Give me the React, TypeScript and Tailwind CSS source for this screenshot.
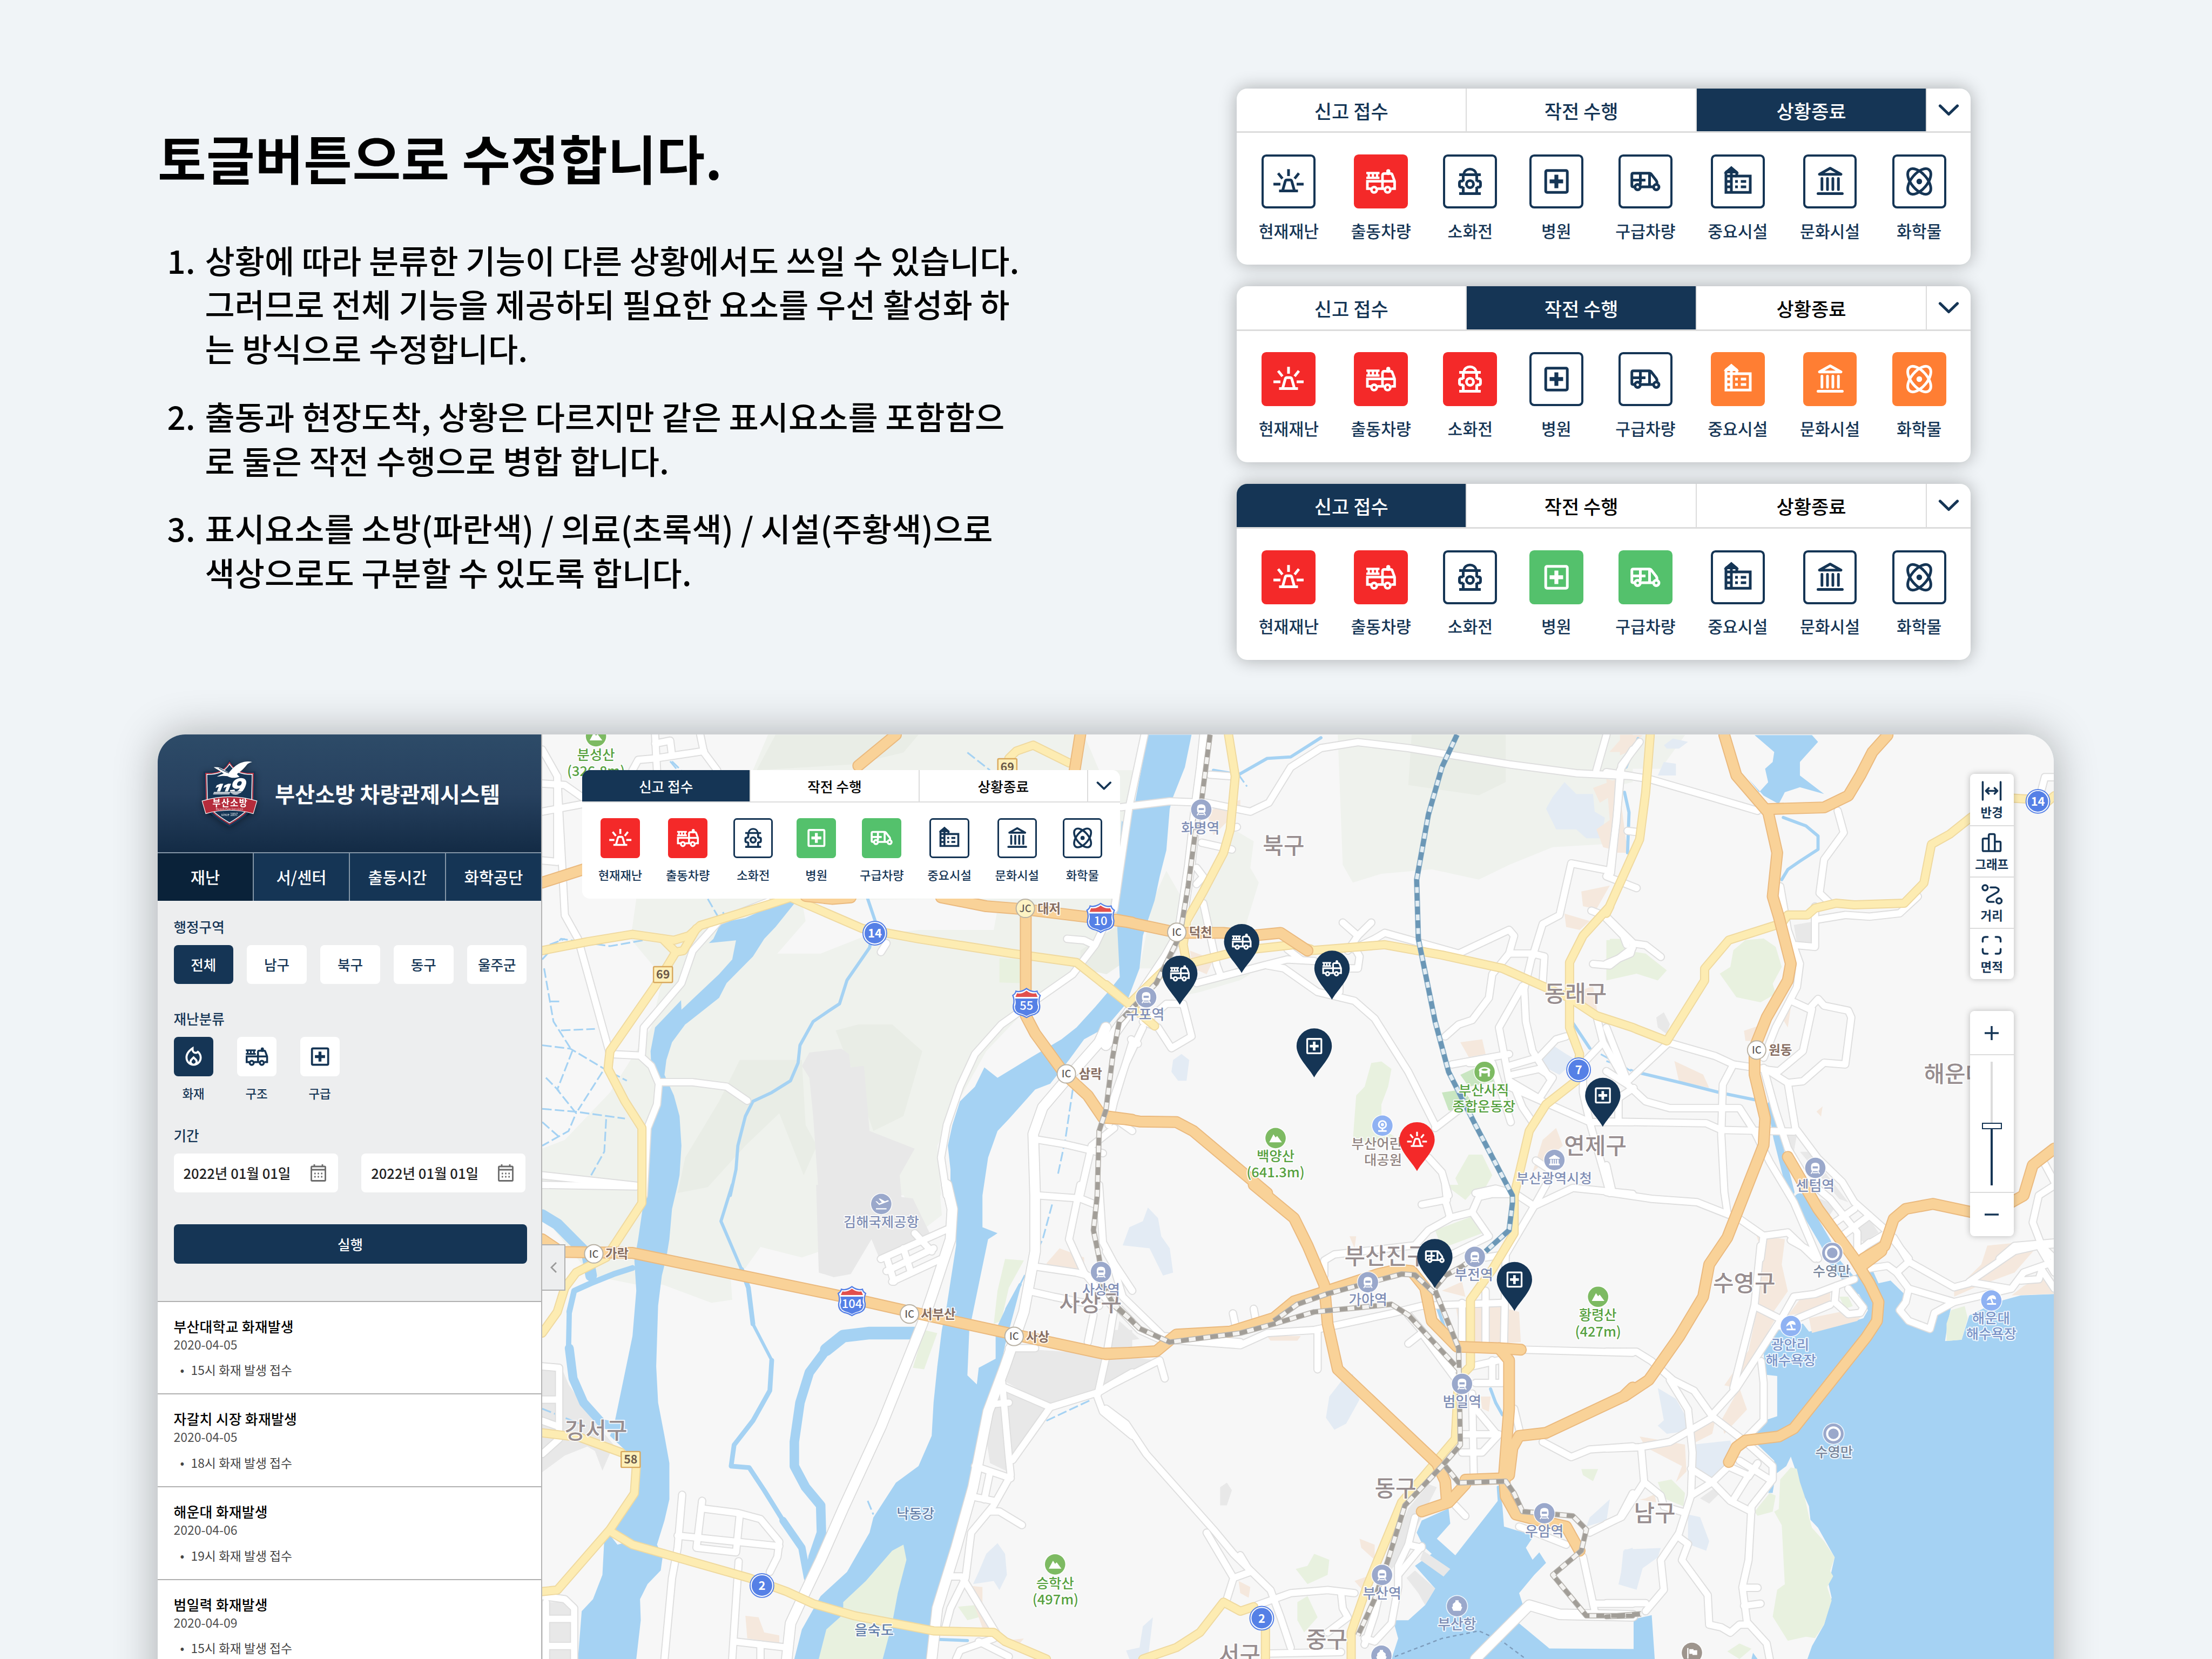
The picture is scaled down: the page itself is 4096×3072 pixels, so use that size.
import React from "react";
import { MdOutlineLocalFireDepartment } from "react-icons/md";

/* ------------------------------------------------------------------ */
/* Pictograms, drawn in a 40 × 40 box                                   */
/* ------------------------------------------------------------------ */

type GlyphName = "siren" | "truck" | "hydrant" | "hospital" | "ambulance" | "building" | "museum" | "atom";

function Glyph({ name }: { name: GlyphName }) {
  const base = { fill: "none", stroke: "currentColor", strokeWidth: 2 } as const;
  switch (name) {
    case "siren":
      return (
        <g {...base}>
          <path d="M20 10.9V16M12.3 13.9l3.2 4M27.7 13.9l-3.2 4M8.8 22H14M26 22h5.2M13 27h14" />
          <path d="M15.6 27l2-7.2q.3-.9 1.1-.9h2.6q.8 0 1.1.9l2 7.2" />
        </g>
      );
    case "truck":
      return (
        <g {...base} strokeWidth={1.9}>
          <path d="M9.2 13.8h9.8M9.2 17.4h9.8M11 13.8v3.6M14.1 13.8v3.6M17.2 13.8v3.6" strokeWidth={1.7} />
          <path d="M12.6 25.4H10V19.9h20.2M17.6 25.4h4.8M27.8 25.4h2.4v-5.5l-1.7-4.7q-.3-1-1.3-1H22.6q-1.4 0-1.4 1.4v9.8" />
          <path d="M25.5 13.8v-1.4" strokeWidth={3} strokeLinecap="round" />
          <circle cx="15" cy="26.2" r="2" />
          <circle cx="25" cy="26.2" r="2" />
        </g>
      );
    case "hydrant":
      return (
        <g {...base}>
          <path d="M15.500 14.600C16 9.600 24 9.600 24.500 14.600" strokeWidth={1.900} />
          <path d="M12 15h16M12 29h16M15 15v5M25 15v5M15 24v4.500M25 24v4.500" />
          <path d="M15 19.700h-1.200q-1.600 0-1.600 1.300v2q0 1.300 1.600 1.300H15M25 19.700h1.200q1.600 0 1.600 1.300v2q0 1.300-1.600 1.300H25" />
          <circle cx="20" cy="22" r="2.600" />
        </g>
      );
    case "hospital":
      return (
        <g {...base}>
          <rect x="12.100" y="11.900" width="16" height="16.200" rx="1" />
          <path d="M15 20h10M20 15v10" strokeWidth={2.900} />
        </g>
      );
    case "ambulance":
      return (
        <g {...base}>
          <path d="M12.200 24h-1.300q-1-.100-1-1V15q0-1.100 1.100-1.100h12q.800 0 1.200.600l3.800 4.900q.500.700.500 1.600v.800M16.200 24h9.600M23 14v10" />
          <path d="M10 19h10M16.200 14v8.500" />
          <circle cx="14.200" cy="24.200" r="2" />
          <circle cx="28" cy="24.200" r="2" />
        </g>
      );
    case "building":
      return (
        <g {...base}>
          <path d="M11.200 28.100V13.300L15.200 10l4 3.300V16h10v12.100z" />
          <path d="M15.200 11v17M11 12.900h8M11 16h8M11 20h4.200M11 24h4.200M18 20h2M22.200 20h4M18 24h2M22.200 24h4" />
          <path d="M12 13l3.200-3 3.200 3z" fill="currentColor" />
        </g>
      );
    case "museum":
      return (
        <g {...base} strokeLinecap="round" strokeLinejoin="round">
          <path d="M12 14.700L20 10.200l8 4.500z" />
          <path d="M13.900 17.800v8.200M18 17.800v8.200M22 17.800v8.200M26.100 17.800v8.200M11 29h18" />
        </g>
      );
    case "atom":
      return (
        <g {...base}>
          <ellipse cx="20" cy="20" rx="5.900" ry="11.300" transform="rotate(40 20 20)" />
          <ellipse cx="20" cy="20" rx="5.900" ry="11.300" transform="rotate(-40 20 20)" />
          <circle cx="20" cy="20" r="2.100" fill="currentColor" stroke="none" />
        </g>
      );
  }
}

/* ------------------------------------------------------------------ */
/* Toggle panel. Every measure is in em, so text size sets the scale    */
/* ------------------------------------------------------------------ */

const LAYERS: { label: string; icon: GlyphName }[] = [
  { label: "현재재난", icon: "siren" },
  { label: "출동차량", icon: "truck" },
  { label: "소화전", icon: "hydrant" },
  { label: "병원", icon: "hospital" },
  { label: "구급차량", icon: "ambulance" },
  { label: "중요시설", icon: "building" },
  { label: "문화시설", icon: "museum" },
  { label: "화학물", icon: "atom" },
];

const TILE = {
  off: "border-[0.46em] border-[#153555] bg-white text-[#153555]",
  red: "bg-[#f42929] text-white",
  green: "bg-[#54c16c] text-white",
  orange: "bg-[#ff7e33] text-white",
};
type Tone = keyof typeof TILE;

const TAB_TONE = {
  active: "bg-[#153555] text-white",
  navy: "text-[#153555]",
  black: "text-black",
};

function TogglePanel({ tabs, tones, className }: { tabs: (keyof typeof TAB_TONE)[]; tones: Tone[]; className: string }) {
  return (
    <div className={`flex h-[33.4em] w-[139.3em] flex-col overflow-hidden rounded-[2em] bg-white font-medium ${className}`}>
      <div className="flex h-[8.45em] border-b-[0.31em] border-[#dcdcdc]">
        {["신고 접수", "작전 수행", "상황종료"].map((t, i) => (
          <div key={t} className={`flex w-[43.68em] items-center justify-center border-r-[0.29em] border-[#dcdcdc] pt-[0.2em] ${TAB_TONE[tabs[i]]}`}>
            <span className="text-[3.6em] leading-none">{t}</span>
          </div>
        ))}
        <div className="flex flex-1 items-center justify-center text-[#153555]">
          <svg className="h-[2.2em] w-[4em]" viewBox="0 0 40 22" fill="none" stroke="currentColor" strokeWidth="5.200" strokeLinecap="round" strokeLinejoin="round">
            <path d="M3.500 3L20 19 36.500 3" />
          </svg>
        </div>
      </div>
      <div className="flex gap-[6.11em] pt-[4.1em] pl-[4.15em]">
        {LAYERS.map((l, i) => (
          <div key={l.label} className="flex flex-col items-center gap-[2.4em]">
            <div className={`flex h-[10.25em] w-[10.25em] items-center justify-center rounded-[0.9em] ${TILE[tones[i]]}`}>
              <svg className="h-[10.25em] w-[10.25em] shrink-0" viewBox="0 0 40 40">
                <Glyph name={l.icon} />
              </svg>
            </div>
            <span className="text-[3.1em] leading-[1.18] whitespace-nowrap text-[#153555]">{l.label}</span>
          </div>
        ))}
      </div>
    </div>
  );
}

/* ------------------------------------------------------------------ */
/* Map                                                                  */
/* ------------------------------------------------------------------ */

/* Six sheets, each with its own local grid: origin x, origin y, units per pixel in x and y. */
const SHEETS: Record<string, [number, number, number, number]> = {
  A: [1030, 1390, 1.4, 1.7818],
  B: [2100, 1390, 1.568, 1.7818],
  C: [3050, 1390, 1.7422, 1.568],
  D: [1030, 2250, 1.4, 1.7422],
  E: [2100, 2250, 1.568, 1.7422],
  F: [3050, 2350, 1.7422, 1.96],
};

function at(sheet: string, x: number, y: number): [number, number] {
  const [ox, oy, sx, sy] = SHEETS[sheet];
  return [ox + x / sx, oy + y / sy];
}

/* "A 1,2 3,4 B 5,6" -> SVG points on the common grid; a letter switches the sheet. */
function pts(line: string): string {
  let sheet = "A";
  const out: string[] = [];
  for (const tok of line.trim().split(/\s+/)) {
    if (SHEETS[tok]) {
      sheet = tok;
      continue;
    }
    const [x, y] = tok.split(",").map(Number);
    const [gx, gy] = at(sheet, x, y);
    out.push(gx.toFixed(1) + "," + gy.toFixed(1));
  }
  return out.join(" ");
}

function Areas({ data, fill }: { data: string[]; fill: string }) {
  return (
    <g fill={fill}>
      {data.map((d, i) => (
        <polygon key={i} points={pts(d)} />
      ))}
    </g>
  );
}

function Lines({ data, color, width, dash, cap = "round" }: { data: string[]; color: string; width: number; dash?: string; cap?: "round" | "butt" }) {
  return (
    <g fill="none" stroke={color} strokeWidth={width} strokeLinecap={cap} strokeLinejoin="round" strokeDasharray={dash}>
      {data.map((d, i) => (
        <polyline key={i} points={pts(d)} />
      ))}
    </g>
  );
}

const HILLS = [
  "A 250,565 235,700 320,830 290,1000 180,1220 60,1380 0,1410 0,1568 D 0,100 130,300 250,330 320,330 450,390 505,380 500,290 540,275 580,205 690,240 738,220 730,0 A 960,1568 1060,1568 1050,1400 1110,1240 1180,1080 1300,920 1420,800 1568,560",
  "A 600,10 1440,10 1480,130 1568,130 1568,300 1500,560 600,560 250,565 250,400 470,130 560,130",
  "D 950,0 1055,0 1062,100 1000,160",
  "B 690,10 1568,10 1568,170 1530,180 1480,380 1330,390 1200,450 1110,500 970,465 820,480 735,510 705,450",
  "B 380,330 440,370 430,460 455,510 420,640 420,680 240,690 290,560 350,410",
  "B 180,470 225,560 210,680 150,800 100,800 140,570",
  "B 270,850 400,810 430,820 400,840 280,880 200,900 150,940",
  "C 0,10 150,10 260,10 220,60 180,110 0,110",
];
const HILLS_DARK = [
  "A 620,10 1000,10 960,70 830,110 570,130",
  "A 525,1110 690,1110 700,1330 730,1400 695,1500 630,1290 540,1400 440,1540 360,1560 380,1440 470,1250",
  "A 780,1010 840,990 930,990 1010,1080 960,1300 880,1350 820,1130 800,1075",
  "B 910,10 1190,10 1190,170 1110,215 900,180",
  "A 1430,740 1568,620 1568,760 1500,820 1430,800",
];
const LAND_PATCH = ["A 690,570 1050,565 1210,600 1200,670 1000,670 860,690 740,750 625,750 700,640"];
const GRAY = [
  "A 710,1085 795,1072 815,1090 820,1135 855,1130 870,1350 990,1410 950,1500 955,1568 735,1568 720,1300 710,1170 690,1130",
  "D 728,0 945,0 955,40 985,45 1030,160 1000,190 895,240 875,180 820,295 775,305 735,290",
  "D 1250,540 1490,560 1480,680 1350,735 1230,650",
  "D 1220,680 1340,740 1250,910",
  "D 1200,720 1225,700 1240,950 1190,920 1175,800",
  "D 0,590 50,600 70,660 130,770 190,860 160,945 140,880 120,865 60,895 0,950",
  "D 10,1380 80,1380 95,1410 95,1568 0,1568",
  "D 1520,480 1568,480 1568,600 1490,690 1490,580",
  "C 620,575 685,565 680,630 630,630",
  "C 165,850 190,835 210,870 200,900 170,880",
  "C 680,1380 760,1410 730,1450",
  "C 640,1250 670,1250 800,1400 770,1390",
  "C 590,1200 630,1200 620,1250",
  "C 820,1490 870,1450 900,1490 850,1520",
  "E 960,990 985,1000 880,1230 830,1300 860,1180 900,1070",
  "F 310,970 360,930 385,940 340,990",
  "E 0,560 150,580 0,650",
  "E 40,450 100,510 30,520",
  "E 340,1000 360,985 375,1010 360,1060 340,1060",
];
const DOCKS = ["E 945,1210 1025,1270 1005,1295 935,1240", "E 895,1300 920,1275 980,1335 950,1390 930,1350"];
const LAKES = [
  "B 1365,170 1400,210 1450,210 1455,270 1485,290 1475,360 1430,360 1400,330 1340,330 1310,260 1330,220",
  "B 200,1110 225,1090 248,1110 240,1180 215,1180 195,1150",
  "B 1330,1060 1370,1090 1400,1110 1350,1160 1300,1130 1300,1090",
  "E 125,75 155,110 165,170 190,210 200,290 170,300 130,210 50,200 70,140 110,120",
  "E 735,625 745,690 755,710 715,790 680,810 655,770 665,700 700,650",
  "D 1210,1185 1230,1220 1235,1290 1215,1340 1200,1310 1145,1320 1160,1280 1180,1220",
  "E 1440,1100 1500,1040 1490,1110 1430,1130",
  "E 1540,1210 1568,1200 1568,1310 1530,1320",
  "E 110,1460 140,1430 125,1568 70,1568 60,1540 100,1530",
  "F 170,560 230,600 260,660 270,720 200,730 170,700 190,680",
  "F 285,770 410,755 420,800 390,860 340,900 285,850",
  "F 270,1030 310,1040 340,1130 330,1165 270,1140",
  "F 60,1160 180,1155 170,1190 120,1230 100,1310 40,1290 50,1240",
  "C 190,40 220,20 270,30 240,50 200,50",
  "C 190,90 230,95 230,130 170,130",
];
const PARKS = [
  "B 790,1120 820,1115 850,1140 840,1200 820,1260 820,1340 860,1370 800,1390 735,1380 745,1230 770,1200",
  "B 1080,1430 1120,1430 1150,1500 1120,1560 1060,1560 1040,1510",
  "B 1500,700 1568,700 1568,740 1540,750 1568,780 1540,820 1490,830",
  "C 0,620 60,620 60,650 130,660 200,710 170,740 100,720 0,740",
  "C 460,620 520,615 560,640 580,700 550,750 560,780 510,805 430,790 375,720 410,700 420,650",
  "E 980,150 1100,100 1120,160 1000,210",
  "E 1010,0 1110,0 1070,50",
  "E 565,1270 600,1260 620,1220 665,1240 660,1290 600,1320",
  "E 570,1380 600,1360 630,1430 590,1480 570,1440",
  "E 1415,940 1465,940 1450,980 1420,960",
  "F 170,910 215,900 260,950 255,1000 190,970",
  "A 1215,765 1270,770 1270,850 1215,848",
  "D 1230,245 1280,250 1240,340 1220,450 1200,460 1210,350",
  "D 1015,480 1050,490 1015,610 985,605",
  "F 400,1540 440,1510 480,1530 440,1568",
  "D 1105,1395 1150,1390 1160,1430 1130,1440",
];
const SHORE_PARKS = [
  "D 960,1190 968,1240 945,1350 930,1450 905,1568 735,1568 755,1470 800,1420 800,1380 860,1310 930,1210",
  "F 610,855 630,860 640,910 655,960 670,1040 680,1080 720,1130 755,1190 740,1240 750,1260 730,1300 745,1350 720,1440 690,1490 660,1485 600,1500 550,1410 565,1310 590,1290 580,1070 555,1020 570,1010 575,900",
  "F 490,1020 540,950 560,960 550,1020 500,1035",
  "F 1140,270 1185,255 1195,300 1175,380 1125,385 1125,320",
  "F 770,220 800,220 815,255 790,265",
];
const TOWN = [
  "B 300,270 400,230 400,260 320,350",
  "B 1450,190 1520,160 1500,220 1470,240",
  "B 1460,330 1510,290 1555,380 1545,410 1480,390",
  "B 1415,540 1500,520 1460,600 1420,590",
  "B 1365,615 1440,640 1410,670 1370,660",
  "B 1055,1050 1120,1040 1130,1090 1080,1100",
  "B 250,740 320,770 300,820 260,800",
  "B 1530,10 1568,10 1568,60 1530,80",
  "B 1400,880 1450,860 1465,960 1430,950",
  "B 1300,1380 1340,1340 1360,1400 1270,1490",
  "C 0,140 40,150 70,360 20,360",
  "C 10,60 60,10 120,10 60,60",
  "C 225,980 320,1020 340,1060 240,1040",
  "C 490,1480 520,1500 590,1510 580,1568 520,1568",
  "C 455,890 520,870 510,920 460,920",
  "C 580,850 610,820 600,880",
  "C 695,1130 715,1115 710,1145",
  "E 1040,390 1160,400 1230,420 1235,520 1060,530",
  "E 1000,350 1060,320 1070,370",
  "E 755,1170 800,1190 800,1240 760,1200",
  "E 740,1310 790,1290 780,1360",
  "E 395,1310 430,1330 425,1365 400,1350",
  "E 725,170 745,170 740,210",
  "E 480,500 580,500 570,515 490,515",
  "E 1115,700 1145,700 1140,750 1120,740",
  "F 520,20 590,10 580,100 600,200 550,280 500,250",
  "F 640,230 740,200 740,240 650,280 600,290",
  "F 380,680 440,560 465,640 390,730",
  "F 500,260 560,300 430,560 390,550 470,420",
  "F 270,700 360,680 350,730 280,770",
  "F 1260,30 1350,20 1420,40 1350,130 1230,180 1150,220 1150,200 1240,100",
  "D 540,1425 575,1430 590,1480 630,1490 630,1515 545,1500",
  "D 1130,1325 1170,1330 1170,1430 1210,1510 1280,1500 1260,1530 1180,1500",
  "D 1340,260 1375,210 1440,240 1440,290 1350,280",
  "F 130,970 160,955 165,985 110,975",
  "F 110,740 260,770 265,870 230,910 250,850 130,780",
];
const SHORE_TOWN = ["F 670,300 780,275 860,270 830,310 680,355", "F 1380,180 1450,140 1480,210 1340,215"];

const WATER = [
  "A 600,595 540,630 475,645 455,700 430,730 400,830 375,900 330,960 300,1000 288,1080 290,1130 305,1200 310,1240 290,1320 275,1380 275,1480 272,1568 D 255,180 245,250 250,350 240,500 215,650 190,800 180,830 240,900 260,930 255,1000 235,1060 190,1140 165,1170 160,1290 135,1370 105,1410 95,1568 250,1568 262,1440 260,1370 280,1320 315,1275 320,1230 305,1190 325,1110 338,1040 338,920 325,830 308,720 303,600 308,400 318,300 330,240 338,180 345,80 360,0 A 365,1500 370,1400 365,1300 350,1230 325,1160 330,1110 345,1050 380,990 420,950 470,900 490,850 560,760 590,700 620,660 680,565",
  "B 125,10 255,10 235,120 200,220 190,260 180,400 160,490 145,570 110,690 100,800 60,920 0,1000 A 1440,1040 1400,1110 1350,1190 1310,1210 1240,1310 1210,1350 1185,1440 1170,1568 D 1170,140 1210,160 1185,180 1165,300 1145,420 1135,480 1130,630 1155,660 1160,605 1205,575 1205,480 1235,400 1275,320 1230,530 1190,780 1150,960 1110,1160 1070,1310 1030,1500 1025,1568 670,1568 690,1470 740,1360 810,1280 870,1150 880,1100 940,985 1000,930 1035,830 1040,720 1050,600 1062,480 1075,400 1100,200 1100,130 1085,0 A 1085,1480 1078,1400 1090,1330 1110,1250 1150,1200 1175,1135 1210,1170 1300,1100 1380,1040 1420,1000 1470,930 1510,870 1535,830 1525,580 1540,300 B 60,320 85,250",
  "E 850,1568 870,1500 855,1440 900,1440 950,1390 980,1335 920,1260 970,1220 945,1195 925,1150 940,1110 1020,1070 1025,1120 985,1170 1040,1225 1100,1140 1170,1040 1170,990 1180,1060 1185,1130 1230,1145 1280,1150 1250,1200 1270,1240 1290,1215 1310,1250 1275,1290 1230,1350 1250,1420 1230,1450 1320,1533 F 90,1531 90,1420 150,1405 160,1568",
  "F 665,1568 680,1520 720,1440 745,1340 735,1290 755,1190 720,1120 700,1080 675,1050 670,1000 650,950 630,880 610,815 595,850 560,880 550,950 535,950 560,890 555,830 500,770 480,740 525,680 565,665 565,515 525,510 520,420 570,340 650,320 670,350 760,330 850,300 865,270 820,180 810,150 850,120 880,120 900,170 940,160 985,210 970,270 1000,310 1070,345 1090,280 1140,260 1130,310 1120,385 1175,380 1200,290 1290,240 1370,215 1482,210 1482,1568",
  "C 490,10 555,60 550,90 525,110 535,150 505,180 470,140 520,190 570,215 590,180 640,165 720,185 640,130 640,90 700,30 680,10",
  "F 480,1568 485,1545 500,1568",
];
const ISLETS = ["A 440,715 515,705 505,770 470,820 370,940 368,880 415,750"];
const SHORE_LAND = ["D 175,1150 200,1190 215,1185 190,1150"];
const CHANNELS: [number, string[]][] = [
  [22, ["D 0,100 40,130 80,180 120,230 130,300"]],
  [11, ["D 240,275 190,295 130,325 85,350 72,420"]],
  [10, ["D 72,420 70,540"]],
  [17, ["D 72,540 82,640 110,720 160,790 200,800"]],
  [24, ["D 995,490 870,490 800,500 755,545"]],
  [18, ["D 755,545 710,620 685,720 670,850 670,930 700,1000 740,1060 742,1150 720,1230 710,1310"]],
  [9, ["D 530,280 548,340 560,460", "D 610,580 605,680 560,780 510,860 502,930 550,935 590,1010 640,1110"]],
  [14, ["D 640,1110 690,1200 705,1300", "C 545,1110 565,1210 590,1300 610,1370"]],
  [21, ["C 640,1390 725,1520 F 760,100 830,190"]],
  [6, [
    "D 505,0 475,120 530,280", "D 560,460 610,580",
    "A 865,565 885,640 870,730 810,840 790,920 760,945 720,980 685,1060 680,1120 660,1180 610,1220 560,1250 540,1300 520,1400 515,1480 500,1568",
    "C 585,255 660,280 700,310 700,350 640,385 600,410 580,440",
    "C 110,1015 250,1045 380,1075 490,1095",
    "D 1270,330 1235,410 1215,520", "B 640,20 550,85 480,90 395,145 320,130", "C 60,180 75,240 70,360", "C 105,20 65,105",
    "E 1145,675 1160,720 1180,760", "E 985,400 1020,510", "B 1390,985 1440,1070", "D 1050,1503 1130,1507", "E 1168,1000 1172,1060",
  ]],
];
const STREAMS = [
  "A 0,1060 75,1072 165,1140 225,1180", "A 0,1275 90,1285 220,1308", "A 5,800 30,980 80,1080 40,1210 90,1290 70,1350 0,1400",
  "A 170,1310 165,1420 130,1500", "A 20,720 60,700", "A 50,1010 140,1005", "A 20,912 50,912", "A 0,770 50,700 180,725 290,700",
  "A 0,1320 45,1370", "A 10,1170 45,1215", "A 160,1150 95,1280", "A 345,100 385,150", "A 440,565 465,620 500,700", "A 480,610 520,700", "A 1130,70 1190,130",
  "A 1410,1210 1390,1380 1370,1500", "D 1355,65 1330,180 1270,330", "D 865,1045 880,1090", "D 1340,780 1460,710", "D 0,740 120,800",
  "B 395,145 420,185", "B 1440,1070 1568,1150", "C 0,980 110,1015", "A 340,100 360,130",
];

const ROADS_WIDE = [
  "B 0,1000 A 1480,1050 1390,1180 1330,1270 1305,1360 1310,1568 D 1310,220 1280,420 1230,600 1185,750 1145,1000 1100,1200 1050,1400 1035,1568",
  "D 1075,0 1090,80 1085,180 1040,350 1010,460 900,800 800,1070 740,1240 690,1370 660,1450 650,1568",
  "B 295,10 285,120 270,250 250,450 220,680 180,760 80,930 0,1060",
  "E 1100,1568 1260,1390 1350,1420 1568,1425",
];
const ROADS = [
  "A 0,60 40,150 55,500 60,620 95,700 130,860 180,1090 260,1095 290,1130 310,1190 305,1260 280,1340 270,1568",
  "A 0,175 60,180 105,220", "A 0,270 105,245", "A 40,150 40,440 0,435",
  "A 600,575 470,640 400,740 370,850 270,1000 265,1090", "A 310,1185 400,1185 490,1200 545,1248", "A 0,1500 250,1535",
  "A 240,130 255,95 300,90 430,65", "A 300,10 305,130", "A 300,40 340,30 345,80", "A 420,10 430,70 465,130",
  "A 1500,640 1470,720 1410,820 1320,900 1220,990 1150,1090 1110,1200 1075,1330 1060,1440 1075,1568",
  "A 1395,700 1440,705 1465,720", "A 900,745 915,715", "A 1320,1380 1390,1395 1490,1425", "A 1520,1340 1460,1400 1430,1568 D 1430,0 1400,180 1440,290 1520,410",
  "A 1535,1320 1568,1350", "A 1568,1050 1520,1250 1505,1330", "D 1480,0 1490,190 1520,260 1568,350", "D 1320,35 1430,45 1480,70", "D 1310,270 1420,290 1450,300", "D 1290,350 1360,370 1480,400", "D 1450,520 1465,430",
  "D 1520,410 1500,560 1475,700 1490,750 1568,830", "E 0,740 60,790 120,890 320,1140 380,1220 490,1340 520,1430 550,1530",
  "E 300,1150 380,1300 360,1370", "E 380,1300 430,1280 400,1225", "D 1220,665 1350,735 1480,685 1568,620 E 0,670 160,580 175,640",
  "D 1350,735 1250,910", "D 1222,650 1240,900 1245,960 1200,1060 1140,1150 1125,1300 1085,1400 1070,1470",
  "D 1150,930 1245,970", "D 1140,1030 1200,1045", "D 1190,1080 1215,1080 1275,1125", "D 1080,1295 1115,1295 1210,1490", "D 1190,950 1175,1040",
  "D 1100,1568 1110,1540 1200,1500", "D 1160,1510 1240,1560", "D 1200,725 1240,720",
  "D 372,1025 360,1200 345,1300 325,1568", "D 425,1045 410,1200 515,1215 525,1090", "D 425,1070 520,1085 580,1105 630,1180 625,1230 605,1280",
  "D 360,1160 630,1195", "D 522,1245 505,1568", "D 510,1510 650,1530", "D 580,1520 580,1568",
  "D 0,600 45,605 45,840 0,890", "D 0,710 40,710", "D 0,780 45,800", "D 0,1360 60,1370 85,1400 85,1568", "D 10,1380 10,1568",
  "D 10,1435 85,1435", "D 10,1525 85,1525", "D 900,245 1080,145", "D 915,285 1040,210", "D 930,320 1060,245", "D 990,160 1035,220", "D 960,210 980,290",
  "D 915,240 935,320", "D 1240,540 1310,540", "D 0,0 250,5",
  "B 115,10 70,250 40,480 25,600", "B 45,255 190,235 300,240 430,270 485,240 550,120 640,55 750,35 900,55 1200,110 1400,140 1568,150 C 0,120 140,140 350,195 500,235",
  "B 310,145 370,150", "B 285,375 375,398", "B 270,515 290,490 270,460", "B 290,580 330,790 340,820", "B 390,322 375,325",
  "B 1490,10 1460,130", "B 1568,60 1530,130 1520,300 1500,470 C 0,430 100,465", "B 1500,470 1385,445 1370,520 1350,620 1300,650 1270,760",
  "B 735,735 800,700 830,680 1050,750 1200,670 1215,690 1200,750 1270,750 1305,760 1300,850", "B 705,645 750,690 790,645", "B 750,690 720,740",
  "B 270,850 470,790 540,770 620,775", "B 540,735 580,770", "B 480,790 530,800 630,880 740,910 800,970 900,1150 980,1330",
  "B 695,880 695,800 750,800 755,760 735,720", "B 230,920 255,1030 195,1070 155,1000 110,980", "B 110,1000 60,1120 10,1280", "B 75,1040 95,1055", "B 230,920 180,920 140,960",
  "B 980,1340 1060,1270", "B 960,1440 1000,1490 1020,1568", "B 1010,1030 1050,990 1090,975 1140,900 1150,820 1200,750",
  "B 1240,860 1170,1000 1200,1180 1290,1240", "B 1270,750 1245,870 1250,980 1270,1080 1320,1170", "B 1030,1125 1200,1090",
  "B 1200,1130 1290,1100 1340,1040 1370,1030", "B 1080,1120 1150,1120 1205,1320", "B 1210,1160 1290,1140 1330,1170 1290,1240 1210,1200",
  "B 1200,1200 1280,1240 1440,1320 1568,1320", "B 1460,960 1480,1050 1430,1110", "B 1480,1050 1540,1170", "B 1420,1120 1420,1220 1440,1320 1500,1560",
  "B 1215,1200 1240,1270 1270,1320", "B 1445,605 1480,620 1540,690 1550,720", "B 1450,785 1500,790 1568,730", "B 1280,1450 1320,1480", "B 1100,1560 1160,1545 1210,1560",
  "C 110,30 50,100 40,200 15,420", "C 0,550 90,630 130,635 180,670", "C 90,630 80,660 0,690", "C 70,295 100,298",
  "C 765,235 785,300 720,380 705,480 740,510", "C 575,460 600,590 640,690 630,760 560,880 520,970", "C 690,520 690,560 690,640 630,635",
  "C 690,560 790,545 870,550 970,540 1030,490", "C 610,800 670,825 700,795 720,815 800,830 810,850 790,990 720,985 650,1040 600,1045",
  "C 680,825 650,950 570,1010 520,1005", "C 205,925 360,965 420,990 530,1005 600,1045 625,1180 700,1270 780,1340 820,1400 920,1480 1000,1568",
  "C 420,990 385,1050 380,1200 390,1370 400,1430", "C 520,1000 560,1130 600,1240 660,1330 740,1390", "C 200,930 70,1040 0,880",
  "C 0,1010 70,1050 130,1100 210,1120 440,1120 490,1190 540,1280 620,1400 700,1568", "C 0,1160 330,1165 380,1185 620,1190", "C 90,1060 40,1090 40,1160",
  "C 0,1370 150,1390 300,1400 440,1450 520,1500 600,1490 690,1568", "C 0,1290 20,1370", "C 520,1500 510,1568 F 510,30 490,250 420,560",
  "C 740,1470 820,1420", "C 740,1390 830,1490 830,1550 870,1520", "C 780,1500 870,1440", "C 820,1550 930,1490", "C 1482,135 1450,135 1440,170", "C 1440,1270 1482,1340",
  "C 1482,1350 1430,1380 1410,1460 1440,1530 1482,1568", "C 1482,1520 1350,1530 1300,1568", "F 1200,170 1150,185 1000,90 950,0",
  "F 610,10 690,60", "F 870,115 930,105 960,130 1000,190 990,240 970,270 1000,310 1070,340 1085,280 1150,240 1340,190 1380,130 1482,90",
  "F 1000,190 1150,240", "F 1000,90 960,130", "F 1482,25 1430,30 1350,50 1200,165 1330,190", "F 1430,30 1482,130", "F 1370,160 1430,155 1440,120 1482,190",
  "F 820,155 760,180 690,210 620,220 580,300 430,560 350,660", "F 760,180 755,240 800,285 840,280 850,260 800,190", "F 490,255 570,300", "F 570,330 740,250",
  "F 0,425 100,425 150,460 220,530 290,570 350,665 460,760 550,850 550,900 480,1000 470,1200 450,1300 465,1430 530,1510 540,1568",
  "F 210,530 270,640", "F 270,640 285,800 280,960", "F 0,785 110,780 210,760 350,670", "F 115,780 125,910 180,960 190,1000 250,1020", "F 125,910 50,1040 0,1065",
  "F 512,460 520,540 520,680 450,760", "F 405,850 350,910 280,960 240,1100 180,1200 190,1310 130,1390", "F 280,860 350,910 410,980 480,1020",
  "F 400,850 470,885 420,975", "F 440,830 540,900", "F 500,840 470,890", "F 450,1303 500,1303", "F 455,1370 510,1362",
  "F 240,1115 270,1140 250,1200 335,1330 340,1440 380,1450 410,1470 440,1440 470,1440", "F 0,1360 130,1360",
  "E 15,380 100,480 160,510 400,530 480,490 620,480 850,425 940,400 1180,390", "E 0,220 20,260 50,370 170,500 400,520", "E 630,480 630,610", "E 378,425 385,460",
  "E 440,410 445,440", "E 940,65 1010,50 1025,110 960,150 920,200 680,230 650,250 650,300", "E 1010,0 1015,50", "E 1020,110 1090,90 1110,40 1150,30 1220,30 1275,70 1310,0",
  "E 1275,70 1390,10 1568,30", "E 1275,70 1190,230 1185,520", "E 1090,90 1140,170 1030,230", "E 1130,240 1190,230", "E 1060,390 1060,520", "E 1130,350 1130,520",
  "E 1240,545 1568,555", "E 900,525 940,490 1040,640", "E 900,430 1040,610", "E 1090,600 1170,580", "E 1100,655 1180,655 1180,580", "E 1150,580 1150,650",
  "E 1090,690 1095,960", "E 1060,825 1170,825 1120,885 1060,885", "E 1100,740 1160,820", "E 1215,740 1235,830", "E 1300,850 1385,900 1440,875 1568,865",
  "E 1440,1150 1530,1100 1568,1020", "E 920,1100 900,1190 870,1260 870,1330 850,1450 800,1510 770,1500", "E 940,1195 870,1290", "E 900,1190 940,1200",
  "E 500,1370 550,1350 660,1340 740,1350", "E 700,1350 705,1400 720,1430 660,1480", "E 480,1550 700,1545", "E 820,1320 800,1420 770,1520", "E 1040,1060 1070,1095", "E 1420,1230 1455,1410",
  "E 1450,1385 1568,1385", "E 450,1390 500,1370", "E 1230,1130 1280,1150 1370,1190",
];
const YELLOW = [
  "A 0,740 120,710 240,685 350,705 390,690 420,655 600,585 660,560", "A 660,560 850,665 1000,700 1250,750 1420,780 1568,930 B 0,855 145,995",
  "A 320,700 355,745 300,860 180,1080 175,1140 220,1250 265,1340 265,1568 D 265,60 170,240 90,290 60,340 40,420 0,490", "A 410,665 375,740 355,745",
  "A 1240,90 1260,65 1305,45 1400,105", "D 0,820 100,835 210,885", "D 250,930 245,1020 180,1140 40,1340 0,1345",
  "D 180,1145 240,1190 550,1300 650,1345 720,1385 830,1425 1040,1475 1200,1480 1230,1510 1340,1568",
  "B 365,10 385,150 370,330 350,410 290,540 240,640 230,720 240,780", "B 70,920 170,810 260,780 400,740 560,720 610,735",
  "B 610,740 830,720 1000,755 1180,800 1380,900 1460,960 1568,1000 C 100,885 200,920 325,740 325,705 405,620 580,570 600,545 665,545 690,525 760,510 820,515 985,510 1050,450 1075,335 1135,305 1205,255 1300,195 1390,200 1450,215 1482,190",
  "C 145,10 130,180 110,320 0,540 B 1500,590 1420,690 1380,780 1380,1000 1410,1090 1400,1180 1310,1260 1260,1350 1215,1568 E 1215,160 1150,280 1085,380 1085,600 1050,640 1040,840 880,1050 780,1320 730,1480 730,1568",
  "E 110,1568 210,1530 280,1480 350,1380 400,1410 440,1395", "E 475,1450 475,1568",
];
const ORANGE = [
  "A 0,510 110,465", "A 940,10 840,115", "A 1430,10 1415,130", "A 700,555 770,565 820,560",
  "A 1060,560 1180,590 1280,600 1568,645 B 30,635 215,680 350,680 430,690 520,680 600,740",
  "A 1285,600 1285,960 1310,1020 1390,1160 1450,1230 1490,1305 1568,1312 B 0,1300 100,1318 210,1320 260,1350 480,1560 E 440,0 560,110 600,200 650,330 660,460 690,610 985,920",
  "D 0,180 50,222 240,225 820,375 980,420 1255,495 1490,558 1568,555 E 0,560 150,550 210,495 370,485 500,440 560,385 660,350 810,295 870,280 910,285 950,340 970,450 1045,535 1170,540 1235,545",
  "E 1170,540 1200,580 1200,740 1185,960 1190,1030 1220,1090 1290,1110 1370,1130 1410,1210",
  "E 1200,960 1210,870 1230,830 1310,820 1540,700 1568,670 F 60,590 140,530 240,370 320,220 340,100 400,0 C 520,1230 525,1150 490,1020 490,940 530,850 600,740 610,690 570,550 550,490 565,360 535,240 430,130 390,10",
  "C 535,230 720,225 800,190 840,130 880,60 930,10", "E 1070,975 1190,970", "E 985,920 1010,980 1015,1050", "E 940,1080 1020,1050 1070,990",
  "C 600,1265 700,1420 820,1568 F 870,170 900,240 895,310 860,370 620,710 570,740 460,755 430,780 405,835",
  "C 1482,1240 1410,1290 1380,1380 1340,1400", "C 1210,1430 1080,1405 990,1420 950,1450 920,1530 850,1568 F 910,50 840,110",
];
const RAIL = [
  "B 310,10 285,230 265,350 245,520 220,690 150,850 40,980 20,1100 0,1280 A 1480,1350 1475,1568 D 1465,150 1480,240 1490,330 1520,400 1568,450 E 30,400 100,475 190,520 400,490 500,460 620,420 760,405 850,395 900,430 1050,610",
  "E 500,450 570,395 660,360 760,330 880,295 920,298 980,360", "E 980,340 1010,300 1060,270 1100,240",
  "E 980,350 1050,540 1055,860 1000,930 890,1060 840,1240 800,1370 750,1490",
  "E 1010,930 1050,985 1190,980 1215,1020 1240,1080 1390,1095 1430,1140 1415,1210 1330,1290 1430,1425 1568,1425 F 0,1410 115,1400",
];
const METRO = ["B 1045,10 1000,120 960,280 925,500 930,700 980,980 1020,1150 1100,1330 1210,1568 E 1210,60 1200,150 1130,220"];
const FERRY = ["E 860,1560 1000,1500 1110,1475 1180,1510 1250,1568"];

type Label = [string, number, number, string, string, number, ("start" | "middle")?];
const D_GRAY = "#978d8f";
const STN = "#7f8eb5";
const GRN = "#56a13f";
const BRN = "#876e62";
const LABELS: Label[] = [
  ["B", 529, 385, "북구", D_GRAY, 43], ["B", 1398, 885, "동래구", D_GRAY, 43], ["B", 1457, 1400, "연제구", D_GRAY, 43],
  ["E", 710, 235, "부산진구", D_GRAY, 43, "start"], ["E", 862, 1003, "동구", D_GRAY, 43], ["E", 657, 1503, "중구", D_GRAY, 43], ["E", 398, 1552, "서구", D_GRAY, 43],
  ["D", 1457, 391, "사상구", D_GRAY, 43], ["D", 143, 812, "강서구", D_GRAY, 43], ["C", 1050, 1018, "해운대구", D_GRAY, 43, "start"], ["F", 456, 168, "수영구", D_GRAY, 43], ["F", 160, 1025, "남구", D_GRAY, 43],
  ["B", 281, 325, "화명역", STN, 26.5], ["B", 117, 955, "구포역", STN, 26.5], ["D", 901, 122, "김해국제공항", STN, 26], ["D", 1485, 345, "사상역", STN, 26],
  ["E", 780, 380, "가야역", STN, 26.5], ["E", 1095, 298, "부전역", STN, 26.5], ["E", 1060, 716, "범일역", STN, 26.5], ["E", 1305, 1145, "우암역", STN, 26.5],
  ["E", 822, 1350, "부산역", STN, 26.5], ["E", 1045, 1452, "부산항", STN, 26.5], ["C", 691, 1350, "센텀역", STN, 26.5],
  ["F", 745, 124, "수영만", "#78859a", 26], ["F", 753, 798, "수영만", "#78859a", 26],
  ["F", 608, 397, "광안리", "#7a94c8", 26], ["F", 610, 456, "해수욕장", "#7a94c8", 26], ["F", 1272, 300, "해운대", "#7a94c8", 26], ["F", 1273, 358, "해수욕장", "#7a94c8", 26],
  ["B", 731, 1393, "부산어린이", "#928582", 26, "start"], ["B", 825, 1448, "대공원", "#928582", 26], ["B", 1334, 1510, "부산광역시청", STN, 26],
  ["B", 1125, 1212, "부산사직", GRN, 26], ["B", 1125, 1267, "종합운동장", GRN, 26], ["B", 505, 1435, "백양산", GRN, 26], ["B", 505, 1490, "(641.3m)", GRN, 26],
  ["E", 1464, 430, "황령산", GRN, 26], ["E", 1465, 485, "(427m)", GRN, 26], ["D", 1363, 1317, "승학산", GRN, 26], ["D", 1364, 1371, "(497m)", GRN, 26],
  ["A", 143, 77, "분성산", GRN, 26], ["A", 143, 132, "(326.8m)", GRN, 26], ["D", 992, 1087, "낙동강", "#6580aa", 26], ["D", 882, 1472, "을숙도", "#6580aa", 27],
  ["B", 247, 678, "덕천", BRN, 24, "start"], ["A", 1426, 1157, "삼락", BRN, 24, "start"], ["A", 1316, 597, "대저", BRN, 24, "start"], ["D", 168, 228, "가락", BRN, 24, "start"],
  ["D", 1006, 427, "서부산", BRN, 24, "start"], ["D", 1286, 502, "사상", BRN, 24, "start"], ["C", 537, 947, "원동", BRN, 24, "start"],
];

type SpotKind = "train" | "plane" | "ship" | "ring" | "beach" | "peak" | "ball" | "wheel" | "hall" | "flag";
const SPOTS: [string, number, number, SpotKind][] = [
  ["B", 284, 263, "train"], ["B", 120, 898, "train"], ["D", 901, 63, "plane"], ["D", 1485, 288, "train"], ["E", 780, 322, "train"], ["E", 1098, 238, "train"],
  ["E", 1060, 658, "train"], ["E", 1305, 1086, "train"], ["E", 822, 1290, "train"], ["E", 1045, 1393, "ship"], ["E", 820, 1557, "ship"], ["C", 691, 1298, "train"],
  ["F", 747, 57, "ring"], ["F", 751, 730, "ring"], ["F", 610, 329, "beach"], ["F", 1273, 234, "beach"], ["B", 505, 1374, "peak"], ["E", 1465, 370, "peak"],
  ["D", 1363, 1255, "peak"], ["A", 143, 15, "peak"], ["B", 1127, 1150, "ball"], ["B", 823, 1332, "wheel"], ["B", 1335, 1448, "hall"], ["F", 283, 1545, "flag"],
];
const SPOT_FILL: Record<SpotKind, string> = {
  train: "#9aa8cb", plane: "#9aa8cb", ship: "#9aa8cb", ring: "#9aa8cb", hall: "#9aa8cb",
  beach: "#8fb2f3", wheel: "#8fb2f3", peak: "#7dba62", ball: "#7dba62", flag: "#9e958d",
};

function SpotMark({ kind }: { kind: SpotKind }) {
  const fill = SPOT_FILL[kind];
  return (
    <>
      <circle r="21" fill="#fff" fillOpacity="0.8" />
      <circle r="19.300" fill={fill} />
      {kind === "train" && (
        <g>
          <path d="M-8-3q0-7 8-7t8 7v5q0 4-4 4h-8q-4 0-4-4z" fill="#fff" />
          <path d="M-5-3h10v4H-5z" fill={fill} />
          <path d="M-5 6l-3 5M5 6l3 5M-5 9H5" stroke="#fff" strokeWidth="2" />
        </g>
      )}
      {kind === "plane" && <path d="M-11-5l3 0 4 4 5-2-6-7 3 0 9 5 5-2q3 0 2 2l-18 7zM-10 8h20v2.500h-20z" fill="#fff" />}
      {kind === "ship" && <path d="M-3-11h6v3l5 4v5l2 1-3 7H-7l-3-7 2-1v-5l5-4z" fill="#fff" />}
      {kind === "ring" && <circle r="12" fill={fill} stroke="#fff" strokeWidth="4" />}
      {kind === "beach" && <path d="M-9 1Q-6-10 3-10q6 1 6 8l-5-1-3-1 3 9h5v3H-8V5h9l-3-8z" fill="#fff" />}
      {kind === "peak" && <path d="M-12 8l8-15 4 6 3-3 9 12z" fill="#fff" />}
      {kind === "ball" && (
        <g>
          <ellipse cy="-3" rx="11" ry="6" fill="#fff" />
          <ellipse cy="-4" rx="6" ry="2" fill={fill} />
          <path d="M-10 0h4v9h-4zM6 0h4v9H6z" fill="#fff" />
        </g>
      )}
      {kind === "wheel" && (
        <g fill="none" stroke="#fff" strokeWidth="3">
          <circle cy="-2" r="7" />
          <circle cy="-2" r="1.500" />
          <path d="M-8 10H8M0 6v4" />
        </g>
      )}
      {kind === "hall" && <path d="M-10-4l10-6 10 6v2h-20zM-8-1h3v8h-3zM-3-1h2v8h-2zM1-1h2v8H1zM5-1h3v8H5zM-10 7h20v3h-20z" fill="#fff" />}
      {kind === "flag" && <path d="M-9-9h2.500v20h-2.500zM-5-7h8v2h7v9H1V2h-6z" fill="#fff" />}
    </>
  );
}

const JUNCTIONS: [string, number, number, string, string][] = [
  ["B", 211, 678, "IC", "#ffffff"], ["A", 1393, 1157, "IC", "#ffffff"], ["A", 1284, 597, "JC", "#fdf3c4"], ["D", 137, 228, "IC", "#ffffff"],
  ["D", 976, 427, "IC", "#ffffff"], ["D", 1254, 501, "IC", "#ffffff"], ["C", 497, 947, "IC", "#ffffff"],
];
const EXPRESSWAYS: [string, number, number, string][] = [["A", 1484, 632, "10"], ["A", 1287, 920, "55"], ["D", 823, 387, "104"]];
const NATIONALS: [string, number, number, string][] = [["A", 884, 681, "14"], ["D", 584, 1325, "2"], ["E", 464, 1433, "2"], ["B", 1407, 1143, "7"], ["C", 1427, 207, "14"]];
const LOCALS: [string, number, number, string][] = [["A", 321, 821, "69"], ["A", 1236, 118, "69"], ["D", 235, 908, "58"]];

/* Pins stand on their tip. */
const PINS: [number, number, GlyphName, string][] = [
  [2357.7, 1847.9, "truck", "#153555"], [2240.3, 1908, "truck", "#153555"], [2529.2, 1898.4, "truck", "#153555"], [2495.4, 2046, "hospital", "#153555"],
  [2690.6, 2223.9, "siren", "#f42929"], [3043.2, 2139.7, "hospital", "#153555"], [2724.4, 2445.7, "ambulance", "#153555"], [2875.5, 2489.3, "hospital", "#153555"],
];

function shift(sheet: string, x: number, y: number) {
  const [gx, gy] = at(sheet, x, y);
  return `translate(${gx.toFixed(1)} ${gy.toFixed(1)})`;
}

function CityMap() {
  return (
    <svg className="block h-full w-full" viewBox="1030 1395 2870 1756" preserveAspectRatio="xMinYMin slice">
      <rect x="1030" y="1395" width="2870" height="1756" fill="#f7f7f7" />
      <Areas data={HILLS} fill="#eff2ed" />
      <Areas data={HILLS_DARK} fill="#e9ede6" />
      <Areas data={LAND_PATCH} fill="#f7f7f7" />
      <Areas data={GRAY} fill="#e8e8e8" />
      <Areas data={LAKES} fill="#e3ebf4" />
      <Areas data={PARKS} fill="#e8f1df" />
      <Areas data={["B 1000,1220 1060,1210 1090,1250 1060,1290 1020,1280", "B 1055,1160 1150,1110 1165,1180 1080,1200"]} fill="#c9e6c1" />
      <Areas data={TOWN} fill="#f5e8dd" />
      <Lines data={STREAMS} color="#a5d2f3" width={3.2} dash="18 6" cap="butt" />
      <Areas data={WATER} fill="#a5d2f3" />
      {CHANNELS.map(([w, d]) => (
        <Lines key={w} data={d} color="#a5d2f3" width={w} />
      ))}
      <Areas data={ISLETS} fill="#eff2ed" />
      <Areas data={SHORE_LAND} fill="#f7f7f7" />
      <Areas data={SHORE_PARKS} fill="#e8f1df" />
      <Areas data={SHORE_TOWN} fill="#f5e8dd" />
      <Areas data={DOCKS} fill="#e8e8e8" />
      <Lines data={FERRY} color="#7d9cbc" width={2.5} dash="7 6" cap="butt" />

      <Lines data={ROADS} color="#dedede" width={16} />
      <Lines data={ROADS_WIDE} color="#dadada" width={22} />
      <Lines data={ROADS} color="#ffffff" width={12} />
      <Lines data={ROADS_WIDE} color="#ffffff" width={18.500} />
      <Lines data={YELLOW} color="#efd99f" width={17.500} />
      <Lines data={YELLOW} color="#fdecb2" width={13.5} />
      <Lines data={ORANGE} color="#eab97e" width={22.500} />
      <Lines data={ORANGE} color="#f9d298" width={18.5} />

      <Lines data={RAIL} color="#bab7b2" width={10.500} cap="butt" />
      <Lines data={RAIL} color="#f4f3f1" width={7} cap="butt" />
      <Lines data={RAIL} color="#a29e98" width={8} dash="15 13" cap="butt" />
      <Lines data={METRO} color="#8fb2ca" width={10.500} cap="butt" />
      <Lines data={METRO} color="#e3edf3" width={6.500} cap="butt" />
      <Lines data={METRO} color="#6b97b6" width={9} dash="15 11" cap="butt" />

      {JUNCTIONS.map(([s, x, y, t, fill], i) => (
        <g key={i} transform={shift(s, x, y)}>
          <circle r="17.500" fill={fill} stroke="#b9b2a5" strokeWidth="2" />
          <text y="7" textAnchor="middle" fontSize="19" fontWeight="500" fill="#5f5b57">{t}</text>
        </g>
      ))}
      {EXPRESSWAYS.map(([s, x, y, t]) => (
        <g key={t} transform={shift(s, x, y)}>
          <path d="M-20-24q9 3 20-5 11 8 20 5 1 5 6 8-4 9-1 19 1 13-10 17-9 2-15 6-6-4-15-6-11-4-10-17 3-10-1-19 5-3 6-8z" fill="#fff" stroke="#5580e6" strokeWidth="2.400" />
          <path d="M-18-20q9 2 18-5 9 7 18 5l3 7h-42z" fill="#e2504d" />
          <path d="M-22-10h44q-3 8 0 15 0 10-9 13-8 2-13 5-5-3-13-5-9-3-9-13 3-7 0-15z" fill="#5580e6" />
          <text y="12" textAnchor="middle" fontSize="22.500" fontWeight="500" fill="#fff">{t}</text>
        </g>
      ))}
      {NATIONALS.map(([s, x, y, t], i) => (
        <g key={i} transform={shift(s, x, y)}>
          <circle r="22.500" fill="#fff" stroke="#5580e6" strokeWidth="2" />
          <circle r="19.500" fill="#5580e6" />
          <text y="8.300" textAnchor="middle" fontSize="22.500" fontWeight="700" fill="#fff">{t}</text>
        </g>
      ))}
      {LOCALS.map(([s, x, y, t], i) => (
        <g key={i} transform={shift(s, x, y)}>
          <rect x="-18" y="-15" width="36" height="30" rx="2" fill="#fdf0ba" stroke="#d9a95d" strokeWidth="2.500" />
          <text y="8" textAnchor="middle" fontSize="22" fontWeight="700" fill="#6b5a4a">{t}</text>
        </g>
      ))}
      {SPOTS.map(([s, x, y, kind], i) => (
        <g key={i} transform={shift(s, x, y)}>
          <SpotMark kind={kind} />
        </g>
      ))}
      {LABELS.map(([s, x, y, t, color, size, anchor = "middle"], i) => (
        <text key={i} transform={shift(s, x, y)} y={size * 0.37} textAnchor={anchor} fontSize={size} fontWeight={color === BRN ? 700 : 500} fill={color} stroke="#ffffff" strokeWidth="4" strokeOpacity="0.85" strokeLinejoin="round" paintOrder="stroke">
          {t}
        </text>
      ))}
      {PINS.map(([x, y, icon, fill], i) => (
        <g key={i} transform={`translate(${x} ${y})`} className="text-white">
          <path d="M0 0C-9-17-33.500-38-33.500-59.500a33.500 33.500 0 1 1 67 0C33.500-38 9-17 0 0z" fill={fill} />
          <g transform="translate(0 -59.500) scale(1.680) translate(-20 -20)">
            <Glyph name={icon} />
          </g>
        </g>
      ))}
    </svg>
  );
}

/* ------------------------------------------------------------------ */
/* Sidebar                                                              */
/* ------------------------------------------------------------------ */

function Emblem() {
  return (
    <svg className="h-[124px] w-[104px] shrink-0 overflow-visible drop-shadow-[0_2px_6px_rgba(0,0,0,0.4)]" viewBox="0 0 106 127">
      <path d="M6 98l14 9 8-8zM100 98l-14 9-8-8z" fill="#0a2239" />
      <path d="M53 0C57 8 62 14 72 19q14 5 30 3l-1 55c-3 22-24 36-48 50C29 113 8 99 5 77L4 22q16 2 30-3C44 14 49 8 53 0z" fill="#153555" />
      <path d="M53 5C57 12 62 18 71 22q12 5 27 3.500L97 76c-3 20-22 33-44 46C31 109 12 96 9 76L8 25.500Q23 27 35 22C44 18 49 12 53 5z" fill="#153555" stroke="#c0303f" strokeWidth="1.800" />
      <path d="M53 8C57 14 62 20 71 24q12 4 25 3.500L95 76c-3 19-21 31-42 43.500C32 107 14 95 11 76L10 27.500Q23 28 35 24C44 20 49 14 53 8z" fill="none" stroke="#fff" strokeWidth="1.500" />
      <path d="M23 14c7-1 14 1 20 5 3 2 6 4 9 5 7-8 14-15 22-18 6-3 15-4 22-2-4 1-6 2-9 4-5 7-12 14-20 19 2 3 4 4 5 5-8 3-17 3-23-1-5-1-12-1-20 1 5-3 9-5 13-6-6-4-12-8-19-12z" fill="#fff" />
      <path d="M33 16c7 3 12 7 19 9" stroke="#153555" strokeWidth="1.200" fill="none" />
      <g fill="#fff" stroke="#fff" strokeWidth="1.500" fontFamily="Liberation Sans" fontWeight="700" fontStyle="italic" transform="translate(10 0) skewX(-10)">
        <text x="24" y="65" fontSize="27" textLength="32" lengthAdjust="spacingAndGlyphs">11</text>
        <text x="54" y="65" fontSize="42" textLength="28" lengthAdjust="spacingAndGlyphs">9</text>
      </g>
      <path d="M22 60.500h56M22 63.300h52" stroke="#153555" strokeWidth="0.900" />
      <path d="M1 78q52-16 104 0l-7 24q-45-13-90 0z" fill="#b52c3c" stroke="#fff" strokeWidth="1.200" />
      <text x="53.500" y="88" fontSize="17" fontWeight="700" fill="#fff" textAnchor="middle" textLength="66">부산소방</text>
      <text x="53" y="95" fontSize="5.500" fill="#f0c8cc" textAnchor="middle" textLength="52">Busan Fire Services</text>
      <text x="53" y="107" fontSize="7.500" fill="#fff" textAnchor="middle" textLength="31" lengthAdjust="spacingAndGlyphs">since 1897</text>
    </svg>
  );
}

function FieldTitle({ children, className = "" }: { children: React.ReactNode; className?: string }) {
  return <h3 className={`h-[38px] text-[25.600px] leading-[38px] font-medium text-[#153555] ${className}`}>{children}</h3>;
}

function DateField() {
  return (
    <div className="flex h-[72.600px] w-[304.200px] items-center justify-between rounded-[8px] bg-white pr-[22px] pl-[18px] text-[#222]">
      <span className="text-[25.600px] leading-none font-medium whitespace-nowrap">2022년 01월 01일</span>
      <svg className="h-[32px] w-[29px]" viewBox="0 0 29 32" fill="none" stroke="#6b6b6b" strokeWidth="2.800">
        <rect x="1.500" y="4" width="26" height="26.500" rx="1.500" />
        <path d="M1.500 10h26M7 0v5M22 0v5" />
        <path d="M7 17h2.600M13.200 17h2.600M19.400 17H22M7 23h2.600M13.200 23h2.600M19.400 23H22" />
      </svg>
    </div>
  );
}

const INCIDENTS = [
  { title: "부산대학교 화재발생", date: "2020-04-05", log: "15시 화재 발생 접수" },
  { title: "자갈치 시장 화재발생", date: "2020-04-05", log: "18시 화재 발생 접수" },
  { title: "해운대 화재발생", date: "2020-04-06", log: "19시 화재 발생 접수" },
  { title: "범일력 화재발생", date: "2020-04-09", log: "15시 화재 발생 접수" },
];

function Sidebar() {
  return (
    <aside className="flex w-[712px] shrink-0 flex-col border-r-2 border-[#b4b4b4] bg-[#edeeef]">
      <header className="flex h-[218px] shrink-0 items-center gap-[32px] bg-linear-to-b from-[#2d4b68] via-[#27415f] to-[#132b45] pl-[81px]">
        <Emblem />
        <h2 className="text-[40.300px] leading-none font-bold whitespace-nowrap text-white">부산소방 차량관제시스템</h2>
      </header>
      <nav className="flex h-[90px] shrink-0 border-t-2 border-[#8496a7] bg-[#153555] text-[29.600px] font-medium text-white">
        {["재난", "서/센터", "출동시간", "화학공단"].map((t, i) => (
          <div key={t} className={`flex flex-1 items-center justify-center ${i === 0 ? "bg-[#0a2239]" : "border-l-2 border-[#8496a7]"}`}>
            {t}
          </div>
        ))}
      </nav>
      <section className="flex h-[740.500px] shrink-0 flex-col pt-[28.700px] pr-[26.500px] pl-[29.500px]">
        <FieldTitle>행정구역</FieldTitle>
        <div className="mt-[15px] flex justify-between">
          {["전체", "남구", "북구", "동구", "울주군"].map((t, i) => (
            <button key={t} className={`h-[72.700px] w-[110.400px] rounded-[8px] text-[25.600px] leading-none font-medium ${i === 0 ? "bg-[#153555] text-white" : "bg-white text-[#153555]"}`}>
              {t}
            </button>
          ))}
        </div>
        <FieldTitle className="mt-[44.500px]">재난분류</FieldTitle>
        <div className="mt-[15px] flex gap-[44px]">
          {["화재", "구조", "구급"].map((t, i) => (
            <div key={t} className="flex w-[73px] flex-col items-center gap-[14px]">
              <div className={`flex h-[73px] w-[73px] items-center justify-center rounded-[8px] ${i === 0 ? "bg-[#153555] text-white" : "bg-white text-[#153555]"}`}>
                {i === 0 ? (
                  <MdOutlineLocalFireDepartment className="h-[45px] w-[45px]" />
                ) : (
                  <svg className="h-[73px] w-[73px]" viewBox="0.500 0.500 39 39">
                    <Glyph name={i === 1 ? "truck" : "hospital"} />
                  </svg>
                )}
              </div>
              <span className="text-[22.400px] leading-[34px] font-medium text-[#153555]">{t}</span>
            </div>
          ))}
        </div>
        <FieldTitle className="mt-[42px]">기간</FieldTitle>
        <div className="mt-[15px] flex gap-[43.500px]">
          <DateField />
          <DateField />
        </div>
        <button className="mt-[59px] h-[72.600px] w-full rounded-[8px] bg-[#153555] text-[25.600px] leading-none font-medium text-white">실행</button>
      </section>
      <ul className="bg-white">
        {INCIDENTS.map((n) => (
          <li key={n.title} className="h-[171.800px] border-t-2 border-[#b0b0b0] pt-[28px] pl-[29.500px]">
            <p className="text-[25.800px] leading-[34px] font-medium tracking-[0.3px] text-black">{n.title}</p>
            <p className="text-[23px] leading-[32px] text-[#505050]">{n.date}</p>
            <p className="mt-[15.500px] flex text-[22.800px] leading-[34px] text-[#444]">
              <span className="w-[32px] text-center">•</span>
              <span>{n.log}</span>
            </p>
          </li>
        ))}
      </ul>
    </aside>
  );
}

/* ------------------------------------------------------------------ */
/* Map controls                                                         */
/* ------------------------------------------------------------------ */

const TOOLS: { label: string; art: React.ReactNode }[] = [
  { label: "반경", art: <path d="M2 2v34M36 2v34M8 19h22M13.500 13.500L8 19l5.500 5.500M24.500 13.500L30 19l-5.500 5.500" /> },
  { label: "그래프", art: <path d="M13.500 35H4q-2 0-2-2V13q0-2 2-2h9.500zM13.500 35V5q0-2.500 2.500-2.500h6.500q2.500 0 2.500 2.500v30zM25 17h9q2 0 2 2v14q0 2-2 2h-9" /> },
  {
    label: "거리",
    art: (
      <>
        <circle cx="6.500" cy="7" r="5" />
        <circle cx="33" cy="32" r="5" />
        <path d="M17 6.500h10q9 3 3 9L12 26q-5 6 2 8h9" />
      </>
    ),
  },
  { label: "면적", art: <path d="M2 12V8q0-5 5-5h4.500M36 12V8q0-5-5-5h-4.500M2 26v4q0 5 5 5h4.500M36 26v4q0 5-5 5h-4.500" /> },
];

function MapControls() {
  return (
    <div className="absolute top-[73px] right-[74.500px] flex w-[80.600px] flex-col gap-[58.700px] text-[#153555]">
      <div className="flex flex-col overflow-hidden rounded-[8px] bg-white shadow-[0_0_12px_rgba(0,0,0,0.25)]">
        {TOOLS.map((t, i) => (
          <div key={t.label} className={`flex h-[95.100px] flex-col items-center ${i > 0 ? "border-t-2 border-[#dcdcdc] pt-[11.500px]" : "pt-[13px]"}`}>
            <svg className="h-[37px] w-[38px] overflow-visible" viewBox="0 0 38 38" fill="none" stroke="currentColor" strokeWidth="3.600" strokeLinecap="round" strokeLinejoin="round">
              {t.art}
            </svg>
            <span className="mt-[7px] text-[22.400px] leading-[26px] font-bold whitespace-nowrap">{t.label}</span>
          </div>
        ))}
      </div>
      <div className="flex h-[416.600px] flex-col rounded-[8px] bg-white shadow-[0_0_12px_rgba(0,0,0,0.25)]">
        <div className="flex h-[80px] items-center justify-center pt-[2px]">
          <svg className="h-[26px] w-[26px]" viewBox="0 0 26 26" stroke="currentColor" strokeWidth="3.500">
            <path d="M0 13h26M13 0v26" />
          </svg>
        </div>
        <div className="flex flex-1 flex-col items-center border-y-2 border-[#dcdcdc] py-[12px]">
          <div className="h-[113px] w-[4px] bg-[#dcdcdc]" />
          <div className="h-[12px] w-[37px] border-2 border-[#153555] bg-white" />
          <div className="w-[4px] flex-1 bg-[#153555]" />
        </div>
        <div className="flex h-[79.700px] items-center justify-center">
          <svg className="h-[26px] w-[26px]" viewBox="0 0 26 26" stroke="currentColor" strokeWidth="3.500">
            <path d="M0 13h26" />
          </svg>
        </div>
      </div>
    </div>
  );
}

/* ------------------------------------------------------------------ */
/* Page                                                                 */
/* ------------------------------------------------------------------ */

const NOTES = [
  ["상황에 따라 분류한 기능이 다른 상황에서도 쓰일 수 있습니다.", "그러므로 전체 기능을 제공하되 필요한 요소를 우선 활성화 하", "는 방식으로 수정합니다."],
  ["출동과 현장도착, 상황은 다르지만 같은 표시요소를 포함함으", "로 둘은 작전 수행으로 병합 합니다."],
  ["표시요소를 소방(파란색) / 의료(초록색) / 시설(주황색)으로", "색상으로도 구분할 수 있도록 합니다."],
];

export default function App() {
  return (
    <div className="flex h-[3072px] w-[4096px] flex-col overflow-hidden bg-[#f0f4f7] font-['Noto_Sans_CJK_KR',sans-serif]">
      <section className="flex h-[1360px] shrink-0 justify-between pr-[447.500px] pl-[292px]">
        <div className="pt-[220.500px]">
          <h1 className="text-[97.500px] leading-[140px] font-bold tracking-[0.4px] whitespace-nowrap text-black">토글버튼으로 수정합니다.</h1>
          <ol className="mt-[79px] flex flex-col gap-[44px] text-[60px] leading-[81.800px] font-medium tracking-[0.060px] text-black">
            {NOTES.map((lines, i) => (
              <li key={i} className="flex">
                <span className="w-[87.500px] shrink-0 pl-[17.500px]">{i + 1}.</span>
                <div>
                  {lines.map((l) => (
                    <p key={l} className="whitespace-nowrap">{l}</p>
                  ))}
                </div>
              </li>
            ))}
          </ol>
        </div>
        <div className="flex flex-col gap-[40.500px] pt-[164px] text-[9.750px]">
          <TogglePanel className="shadow-[0_0_32px_rgba(0,0,0,0.3)]" tabs={["navy", "navy", "active"]} tones={["off", "red", "off", "off", "off", "off", "off", "off"]} />
          <TogglePanel className="shadow-[0_0_32px_rgba(0,0,0,0.3)]" tabs={["navy", "active", "black"]} tones={["red", "red", "red", "off", "off", "orange", "orange", "orange"]} />
          <TogglePanel className="shadow-[0_0_32px_rgba(0,0,0,0.3)]" tabs={["active", "black", "black"]} tones={["red", "red", "off", "green", "green", "off", "off", "off"]} />
        </div>
      </section>

      <main className="ml-[292px] flex h-[1800px] w-[3511px] shrink-0 overflow-hidden rounded-t-[51px] shadow-[0_0_80px_rgba(0,0,0,0.3)]">
        <Sidebar />
        <div className="relative h-[1713px] flex-1">
          <CityMap />
          <div className="absolute top-[65.500px] left-[74px] text-[7.150px]">
            <TogglePanel className="" tabs={["active", "black", "black"]} tones={["red", "red", "off", "green", "green", "off", "off", "off"]} />
          </div>
          <button className="absolute top-[944px] left-0 flex h-[86.400px] w-[43px] items-center justify-center border-2 border-l-0 border-[#b0b0b0] bg-[#edeeef] text-[#999]">
            <svg className="h-[20px] w-[12px]" viewBox="0 0 12 20" fill="none" stroke="currentColor" strokeWidth="2.800">
              <path d="M11 1L2 10l9 9" />
            </svg>
          </button>
          <MapControls />
        </div>
      </main>
    </div>
  );
}
